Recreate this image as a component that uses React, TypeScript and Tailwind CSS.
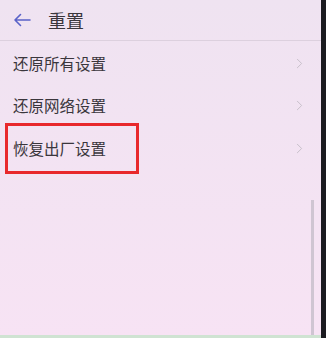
import { ChevronRight } from 'lucide-react';

const rows = ['还原所有设置', '还原网络设置', '恢复出厂设置'];

export default function App() {
  return (
    <div
      className="flex h-[338px] w-[326px] overflow-hidden"
      style={{ fontFamily: '"Noto Sans CJK SC", "Noto Sans", sans-serif' }}
    >
      <div className="relative flex w-[321px] flex-col bg-gradient-to-b from-[#efe3f1] to-[#f7e3f4]">
        {/* header */}
        <div className="flex h-[41px] items-center border-b border-[#dcd0de] pl-[13px]">
          <svg width="18" height="14" viewBox="0 0 18 14" className="text-[#5a63c8]">
            <path d="M17 7H2M7.5 1.5L2 7l5.5 5.5" fill="none" stroke="currentColor" strokeWidth="1.6" strokeLinecap="round" strokeLinejoin="round" />
          </svg>
          <span className="ml-[17px] text-[18px] leading-none text-[#3a363c]">重置</span>
        </div>

        {/* list */}
        <div className="flex flex-col pt-[1px]">
          {rows.map((r) => (
            <div key={r} className="flex h-[42.5px] items-center justify-between pl-[13px] pr-[13px]">
              <span className="text-[15.5px] text-[#3a363c]">{r}</span>
              <ChevronRight size={17} strokeWidth={1.3} className="text-[#c4bcc6]" />
            </div>
          ))}
        </div>

        {/* annotation box */}
        <div className="absolute left-[5px] top-[123px] h-[51px] w-[134px] border-[3px] border-[#e8282c]" />

        {/* scrollbar */}
        <div className="absolute right-[7px] top-[200px] h-[135px] w-[3px] bg-[#cfc5d2]" />

        <div className="mt-auto h-[3px] bg-[#cfe3d2]" />
      </div>
      <div className="w-[5px] bg-[#1b1b20]" />
    </div>
  );
}
